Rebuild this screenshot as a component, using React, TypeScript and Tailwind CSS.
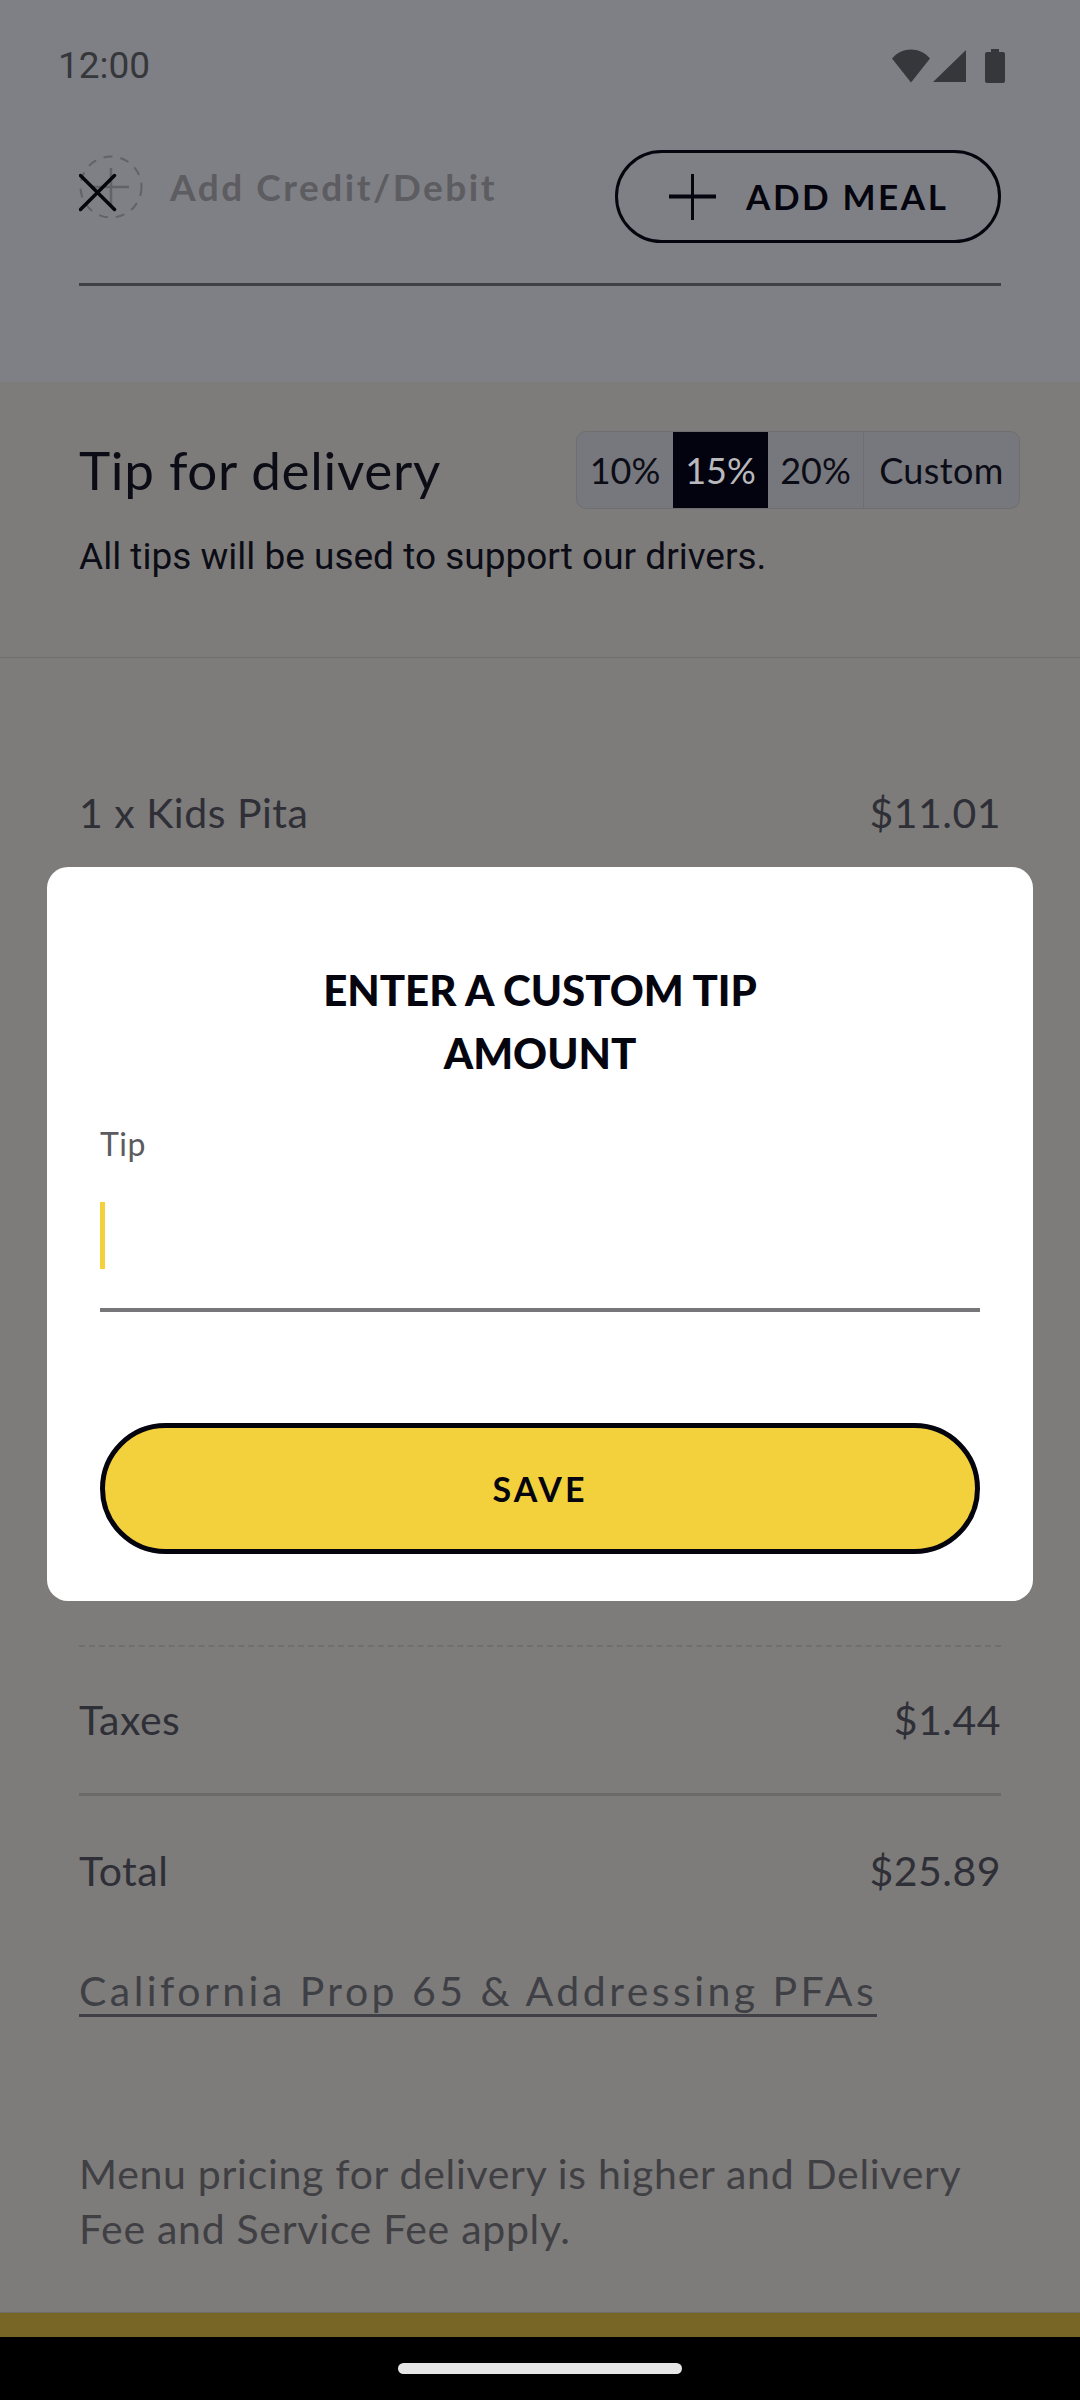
const sans = "font-['Lato','Liberation_Sans',sans-serif]";

function StatusIcons() {
  return (
    <div className="flex items-center">
      <svg width="38" height="34" viewBox="0 0 38 34" className="mr-[3px]">
        <path d="M0 9.5C5 3.5 12 0.5 19 0.5S33 3.5 38 9.5L19 33.5Z" fill="#36373b" />
      </svg>
      <svg width="33" height="34" viewBox="0 0 33 34" className="mr-[19px]">
        <path d="M33 1V33H0Z" fill="#36373b" />
      </svg>
      <svg width="20" height="34" viewBox="0 0 20 34">
        <path d="M6 0H14V3H18Q20 3 20 5V32Q20 34 18 34H2Q0 34 0 32V5Q0 3 2 3H6Z" fill="#36373b" />
      </svg>
    </div>
  );
}

function AddCardIcon() {
  return (
    <svg width="66" height="66" viewBox="0 0 66 66" className="shrink-0">
      <circle cx="32" cy="33" r="30.5" fill="none" stroke="#626267" strokeWidth="2" strokeDasharray="9 8" />
      <path d="M12 33H50M32 14V52" stroke="#626267" strokeWidth="2.5" fill="none" />
      <path d="M1.5 21.5L35.5 55.5M35.5 21.5L1.5 55.5" stroke="#05050a" strokeWidth="3.5" strokeLinecap="round" fill="none" />
    </svg>
  );
}

function PlusIcon() {
  return (
    <svg width="47" height="46" viewBox="0 0 47 46" className="shrink-0">
      <path d="M0 22.5H47" stroke="#05050f" strokeWidth="4" fill="none" />
      <path d="M23.5 0V46" stroke="#05050f" strokeWidth="3" fill="none" />
    </svg>
  );
}

function PriceRow({ label, price }: { label: string; price: string }) {
  return (
    <div className="flex items-center justify-between text-[41px] leading-[50px] tracking-[0.5px] text-[#2f2f38]">
      <span>{label}</span>
      <span>{price}</span>
    </div>
  );
}

function TipOptions() {
  return (
    <div className="flex h-[78px] w-[444px] overflow-hidden rounded-[10px] border border-[#6d6e72] bg-[#77787d] text-[36px] text-[#0c0c16]">
      <div className="flex w-[96px] items-center justify-center">10%</div>
      <div className="flex w-[95px] items-center justify-center bg-[#03030f] text-[#b9b9bd]">15%</div>
      <div className="flex w-[96px] items-center justify-center border-r border-[#6d6e72]">20%</div>
      <div className="flex flex-1 items-center justify-center tracking-[0.4px]">Custom</div>
    </div>
  );
}

function TipModal() {
  return (
    <div className="absolute left-[47px] top-[867px] flex h-[734px] w-[986px] flex-col rounded-[21px] bg-white px-[53px]">
      <h2 className="mt-[92px] text-center text-[42px] font-black leading-[63px] text-[#05050f]">
        ENTER A CUSTOM TIP
        <br />
        AMOUNT
      </h2>
      <label className="mt-[39px] text-[32px] leading-[40px] tracking-[0.5px] text-[#5c5c60]">Tip</label>
      <div className="mt-[38px] h-[110px] border-b-4 border-[#77777a]">
        <div className="h-[67px] w-[5px] bg-[#f3d13c]" />
      </div>
      <button className="mt-[111px] flex h-[131px] items-center justify-center rounded-full border-[5px] border-[#04040f] bg-[#f3d13c] text-[34px] font-bold tracking-[3px] text-[#05050f]">
        SAVE
      </button>
    </div>
  );
}

export default function App() {
  return (
    <div className={`relative flex h-[2400px] w-[1080px] flex-col overflow-hidden bg-[#7d7c7a] ${sans}`}>
      <section className="h-[382px] shrink-0 bg-[#7f8085] px-[79px]">
        <div className="flex h-[132px] items-start justify-between">
          <span className="-ml-[21px] mt-[43px] font-['Roboto',sans-serif] text-[37px] leading-[46px] text-[#36373b]">12:00</span>
          <div className="mr-[-4px] mt-[49px]">
            <StatusIcons />
          </div>
        </div>
        <div className="flex h-[154px] items-start justify-between border-b-[3px] border-[#3f4045]">
          <div className="mt-[22px] flex items-center">
            <AddCardIcon />
            <span className="ml-[25px] text-[37px] font-bold leading-[44px] tracking-[2.5px] text-[#5d5c60]">Add Credit/Debit</span>
          </div>
          <button className="mt-[18px] flex h-[93px] w-[386px] items-center rounded-full border-[3px] border-[#05050f] pl-[51px] text-[35px] font-bold tracking-[2.6px] text-[#05050f]">
            <PlusIcon />
            <span className="ml-[30px]">ADD MEAL</span>
          </button>
        </div>
      </section>

      <section className="h-[276px] shrink-0 border-b border-[#6f6e6e] px-[60px] pl-[79px]">
        <div className="mt-[49px] flex h-[78px] items-center justify-between">
          <h2 className="text-[53px] leading-[60px] tracking-[0.7px] text-[#0c0c16]">Tip for delivery</h2>
          <TipOptions />
        </div>
        <p className="mt-[26px] font-['Roboto',sans-serif] text-[37px] leading-[44px] text-[#0c0c16]">All tips will be used to support our drivers.</p>
      </section>

      <section className="shrink-0 px-[79px]">
        <div className="mt-[130px]">
          <PriceRow label="1 x Kids Pita" price="$11.01" />
        </div>
        <div className="mt-[807px] border-t-2 border-dashed border-[#6f6f70]" />
        <div className="mt-[48px]">
          <PriceRow label="Taxes" price="$1.44" />
        </div>
        <div className="mt-[48px] border-t-[3px] border-[#6a6a6b]" />
        <div className="mt-[50px]">
          <PriceRow label="Total" price="$25.89" />
        </div>
        <a className="mt-[72px] block w-fit border-b-[3px] border-[#3f4045] text-[41px] leading-[46px] tracking-[3.45px] text-[#3f4045]">California Prop 65 &amp; Addressing PFAs</a>
        <p className="mt-[129px] text-[41px] leading-[55px] tracking-[0.7px] text-[#404044]">
          Menu pricing for delivery is higher and Delivery
          <br />
          Fee and Service Fee apply.
        </p>
      </section>

      <div className="mt-auto h-[25px] shrink-0 border-t border-[#6f6f6a] bg-[#786627]" />
      <div className="flex h-[63px] shrink-0 justify-center bg-black pt-[26px]">
        <div className="h-[11px] w-[284px] rounded-full bg-[#e6e6e6]" />
      </div>

      <TipModal />
    </div>
  );
}
